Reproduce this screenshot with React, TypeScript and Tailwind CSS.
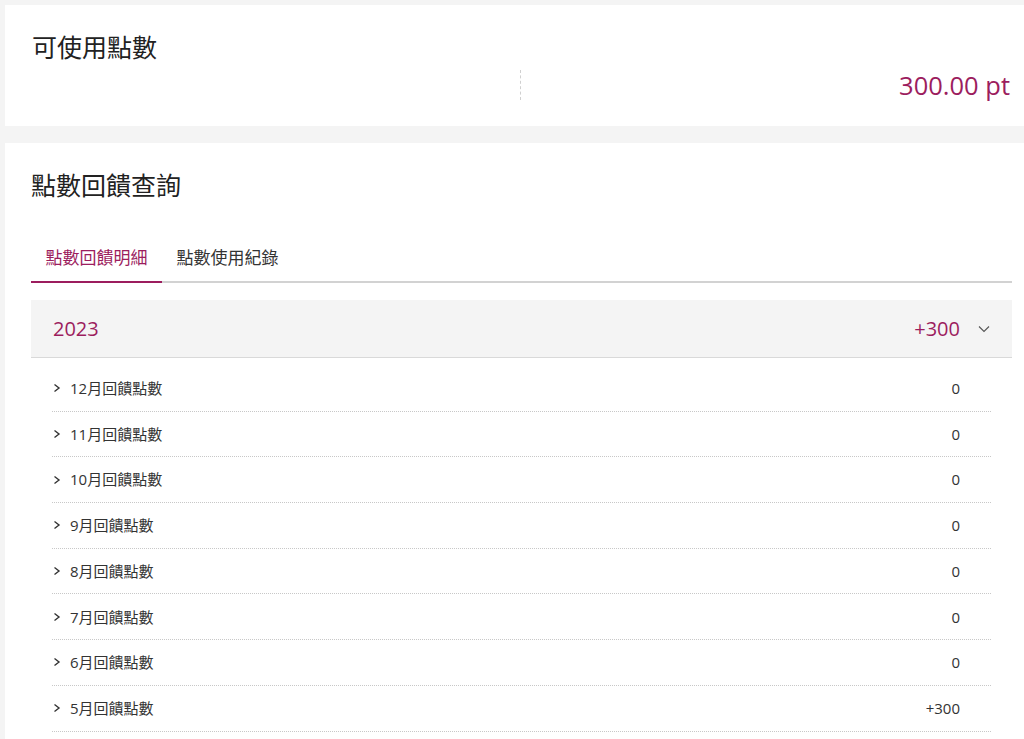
import React from "react";

const rows: { m: string; v: string }[] = [
  { m: "12", v: "0" },
  { m: "11", v: "0" },
  { m: "10", v: "0" },
  { m: "9", v: "0" },
  { m: "8", v: "0" },
  { m: "7", v: "0" },
  { m: "6", v: "0" },
  { m: "5", v: "+300" },
];

const font = { fontFamily: '"Open Sans", "Noto Sans CJK TC", sans-serif' };

export default function App() {
  return (
    <div
      className="min-h-[739px] bg-[#f4f4f4] pl-[5px] pt-[5px] text-[#333]"
      style={font}
    >
      {/* Available points card */}
      <div className="flex h-[121px] flex-col bg-white">
        <div className="ml-[27px] mt-[27px] h-[30px] text-[25px] leading-[30px] font-normal text-[#222]">
          可使用點數
        </div>
        <div className="mt-[8px] flex h-[30px] items-center">
          <div className="h-[30px] w-[516px] border-r border-dashed border-[#d0d0d0]" />
          <div className="flex-1 pr-[14px] text-right text-[25.5px] leading-[30px] text-[#9c1d5e]">
            300.00 pt
          </div>
        </div>
      </div>

      {/* Points query card */}
      <div className="mt-[17px] h-[600px] bg-white pl-[26px] pr-[12px]">
        <div className="pt-[27px] h-[57px] text-[25px] leading-[30px] font-normal text-[#222]">
          點數回饋查詢
        </div>
        <div className="mt-[48px] flex border-b-2 border-[#d2d2d2]">
          <div className="-mb-[2px] w-[131px] border-b-2 border-[#9c1d5e] pb-[13px] text-center text-[17px] leading-[20px] text-[#9c1d5e]">
            點數回饋明細
          </div>
          <div className="w-[131px] pb-[13px] text-center text-[17px] leading-[20px] text-[#333]">
            點數使用紀錄
          </div>
        </div>

        <div className="mt-[17px]">
          <div className="flex h-[58px] items-center border-b border-[#d9d9d9] bg-[#f4f4f4] pl-[22px] pr-[22px]">
            <div className="flex-1 text-[20px] text-[#9c1d5e]">2023</div>
            <div className="text-[20px] text-[#9c1d5e]">+300</div>
            <svg
              className="ml-[18px]"
              width="12"
              height="8"
              viewBox="0 0 12 8"
              fill="none"
            >
              <path d="M1 1.5L6 6.5L11 1.5" stroke="#555" strokeWidth="1.1" />
            </svg>
          </div>
          <div className="pt-[8px] pl-[21px] pr-[21px]">
            {rows.map((r) => (
              <div
                key={r.m}
                className="flex h-[45.7px] items-center border-b border-dotted border-[#c8c8c8]"
              >
                <svg
                  className="ml-[1px] mr-[9px]"
                  width="8"
                  height="10"
                  viewBox="0 0 8 10"
                  fill="none"
                >
                  <path d="M1.5 1.5L6 5L1.5 8.5" stroke="#333" strokeWidth="1.4" />
                </svg>
                <div className="flex-1 text-[15px]">{r.m}月回饋點數</div>
                <div className="pr-[31px] text-[15px]">{r.v}</div>
              </div>
            ))}
          </div>
        </div>
      </div>
    </div>
  );
}
